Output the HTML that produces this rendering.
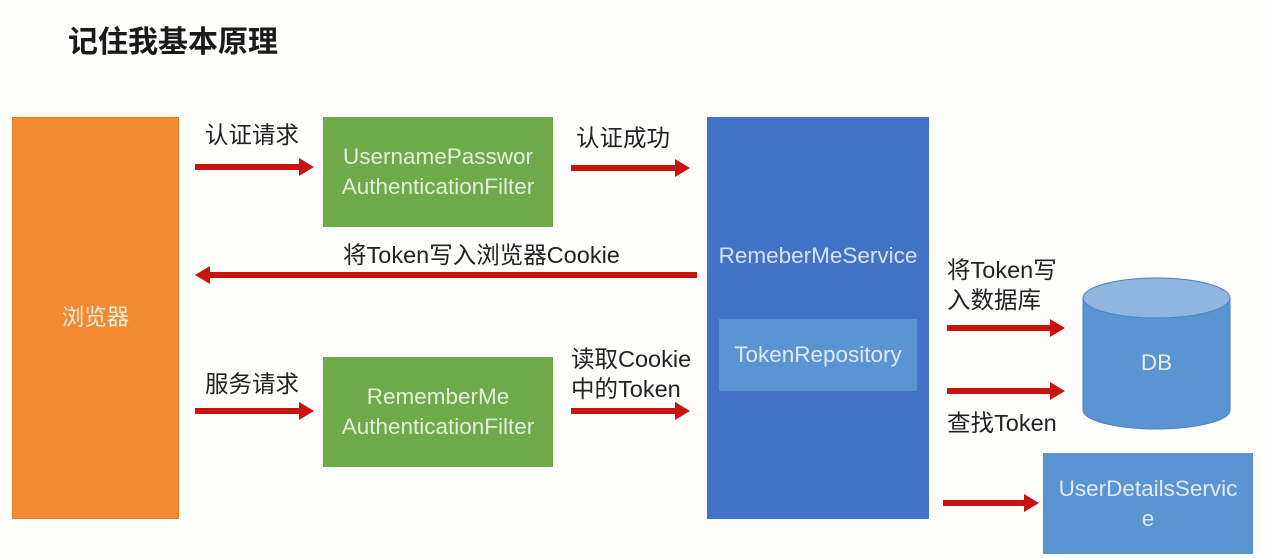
<!DOCTYPE html>
<html><head><meta charset="utf-8"><style>
body{margin:0;width:1267px;height:558px;background:#fdfdfb;position:relative;overflow:hidden;font-family:"Liberation Sans","Noto Sans CJK SC",sans-serif}
.a{position:absolute}
.box{position:absolute;display:flex;align-items:center;justify-content:center;text-align:center;color:#e4eedc;font-size:22.5px;line-height:30px}
.t{position:absolute;font-size:23.5px;color:#222;line-height:28px}
</style></head><body>
<div class="a" style="left:68px;top:17px;font-size:30px;font-weight:bold;color:#1a1a1a">记住我基本原理</div>
<div class="box" style="left:12px;top:117px;width:167px;height:402px;background:#f28a32;border:1px solid #e07a20;box-sizing:border-box">浏览器</div>
<div class="box" style="left:323px;top:117px;width:230px;height:110px;background:#6ea94a">UsernamePasswor<br>AuthenticationFilter</div>
<div class="box" style="left:323px;top:357px;width:230px;height:110px;background:#6ea94a">RememberMe<br>AuthenticationFilter</div>
<div class="a" style="left:707px;top:117px;width:222px;height:402px;background:#4373c6"></div>
<div class="box" style="left:707px;top:242px;width:222px;height:28px;color:#d6e2f4">RemeberMeService</div>
<div class="box" style="left:719px;top:319px;width:198px;height:72px;background:#5b94d2;color:#e0eaf6">TokenRepository</div>
<div class="box" style="left:1043px;top:453px;width:210px;height:101px;background:#5a95d2;color:#e0eaf6">UserDetailsServic<br>e</div>
<svg class="a" style="left:0;top:0" width="1267" height="558">
<g fill="#5a95d2" stroke="#4a80bd" stroke-width="1">
<path d="M1083 298 V410 A73.5 19 0 0 0 1230 410 V298 Z"/>
<ellipse cx="1156.5" cy="298" rx="73.5" ry="20" fill="#8fb6e0"/>
</g>
<g fill="#c8140f" stroke="none">
<rect x="195" y="164" width="105" height="6"/><path d="M299 158 L314 167 L299 176Z"/>
<rect x="571" y="165" width="105" height="6"/><path d="M675 159 L690 168 L675 177Z"/>
<rect x="209" y="272" width="488" height="6"/><path d="M210 266 L195 275 L210 284Z"/>
<rect x="195" y="408" width="105" height="6"/><path d="M299 402 L314 411 L299 420Z"/>
<rect x="571" y="408" width="105" height="6"/><path d="M675 402 L690 411 L675 420Z"/>
<rect x="947" y="325" width="104" height="6"/><path d="M1050 319 L1065 328 L1050 337Z"/>
<rect x="947" y="388" width="104" height="6"/><path d="M1050 382 L1065 391 L1050 400Z"/>
<rect x="943" y="500" width="82" height="6"/><path d="M1024 494 L1039 503 L1024 512Z"/>
</g>
</svg>
<div class="box" style="left:1083px;top:348px;width:147px;height:30px">DB</div>
<div class="t" style="left:205px;top:121px">认证请求</div>
<div class="t" style="left:576px;top:124px">认证成功</div>
<div class="t" style="left:343px;top:241px">将Token写入浏览器Cookie</div>
<div class="t" style="left:205px;top:370px">服务请求</div>
<div class="t" style="left:571px;top:344px;line-height:30px">读取Cookie<br>中的Token</div>
<div class="t" style="left:947px;top:255px;line-height:30px">将Token写<br>入数据库</div>
<div class="t" style="left:947px;top:409px">查找Token</div>
</body></html>
